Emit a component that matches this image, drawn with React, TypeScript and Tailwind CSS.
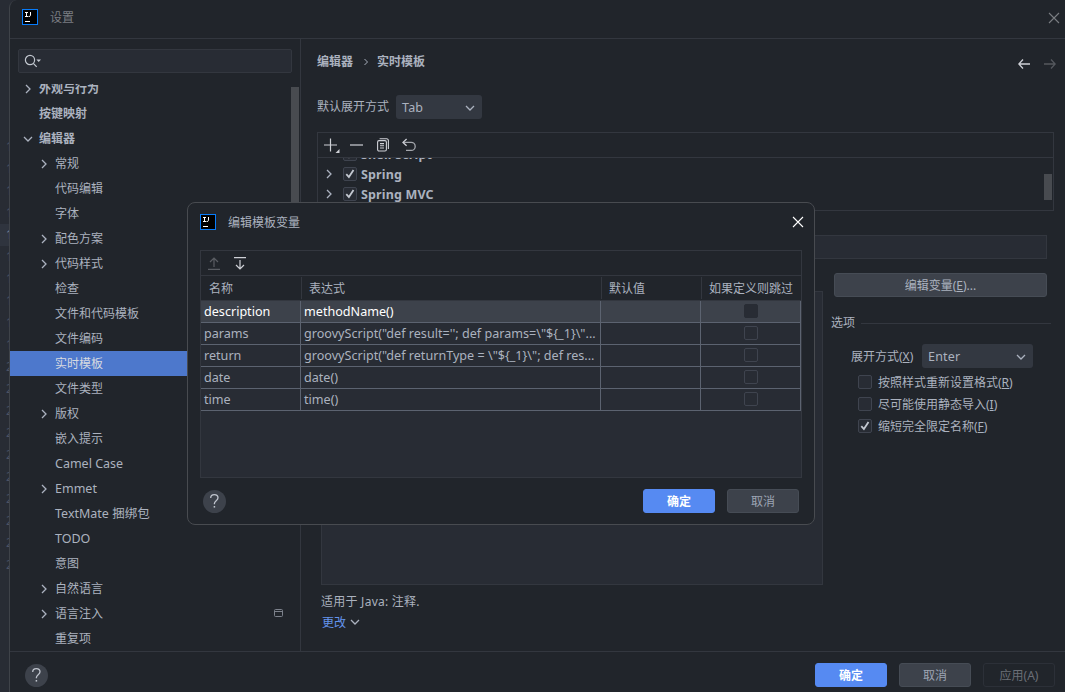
import React from 'react';

interface TreeItem {
  label: string;
  level: 0 | 1;
  arrow?: 'right' | 'down';
  bold?: boolean;
  selected?: boolean;
  latin?: boolean;
  project?: boolean;
}

const treeItems: TreeItem[] = [
  { label: '外观与行为', level: 0, arrow: 'right', bold: true },
  { label: '按键映射', level: 0, bold: true },
  { label: '编辑器', level: 0, arrow: 'down', bold: true },
  { label: '常规', level: 1, arrow: 'right' },
  { label: '代码编辑', level: 1 },
  { label: '字体', level: 1 },
  { label: '配色方案', level: 1, arrow: 'right' },
  { label: '代码样式', level: 1, arrow: 'right' },
  { label: '检查', level: 1 },
  { label: '文件和代码模板', level: 1 },
  { label: '文件编码', level: 1 },
  { label: '实时模板', level: 1, selected: true },
  { label: '文件类型', level: 1 },
  { label: '版权', level: 1, arrow: 'right' },
  { label: '嵌入提示', level: 1 },
  { label: 'Camel Case', level: 1, latin: true },
  { label: 'Emmet', level: 1, arrow: 'right', latin: true },
  { label: 'TextMate 捆绑包', level: 1, latin: true },
  { label: 'TODO', level: 1, latin: true },
  { label: '意图', level: 1 },
  { label: '自然语言', level: 1, arrow: 'right' },
  { label: '语言注入', level: 1, arrow: 'right', project: true },
  { label: '重复项', level: 1 },
];

const variables = [
  { name: 'description', expression: 'methodName()' },
  { name: 'params', expression: 'groovyScript("def result=\'\'; def params=\\"${_1}\\"...' },
  { name: 'return', expression: 'groovyScript("def returnType = \\"${_1}\\"; def res...' },
  { name: 'date', expression: 'date()' },
  { name: 'time', expression: 'time()' },
];

// Leading digit of each editor line number, the rest is under the window
const gutterDigits = '11111111112222222222'.split('');
const currentLine = 4;

const Chevron: React.FC<{ dir: 'right' | 'down'; className?: string }> = ({ dir, className = '' }) => (
  <svg className={`shrink-0 ${className}`} width="10" height="10" viewBox="0 0 10 10" fill="none" stroke="currentColor" strokeWidth="1.3">
    <path d={dir === 'right' ? 'M3 1l4 4-4 4' : 'M1 3l4 4 4-4'} />
  </svg>
);

const Logo = () => (
  <svg className="shrink-0" width="16" height="16" viewBox="0 0 16 16">
    <rect x="0.5" y="0.5" width="15" height="15" fill="#000" stroke="#087cfa" />
    <path d="M3 3.5h3M4.5 3.5v4M3 7.5h3M8.5 3v3.5q0 1-2 1" fill="none" stroke="#fff" />
    <path d="M3 12.5h5" stroke="#fff" />
  </svg>
);

const CloseIcon = ({ className = '' }) => (
  <svg className={className} width="12" height="12" viewBox="0 0 12 12" stroke="currentColor" strokeWidth="1.1">
    <path d="M1 1l10 10M11 1L1 11" />
  </svg>
);

const Checkbox: React.FC<{ checked?: boolean; plain?: boolean }> = ({ checked, plain }) => (
  <span className={`flex h-3.5 w-3.5 shrink-0 items-center justify-center rounded-xs border bg-[#282c34] ${plain ? 'border-[#282c34]' : 'border-[#3f444f]'}`}>
    {checked && (
      <svg width="10" height="10" viewBox="0 0 10 10" fill="none" stroke="#c3c8d0" strokeWidth="1.8">
        <path d="M1.3 5.2l2.6 2.9 4.6-7" />
      </svg>
    )}
  </span>
);

const Button: React.FC<{ kind?: 'primary' | 'normal' | 'disabled'; children: React.ReactNode }> = ({ kind = 'normal', children }) => {
  const styles = {
    primary: 'border-[#568af2] bg-[#568af2] font-bold text-white',
    normal: 'border-[#464c55] bg-[#3d424b] text-[#9da5b4]',
    disabled: 'border-[#2c3038] text-[#6b6f77]',
  };
  return <button className={`flex h-6 w-[72px] items-center justify-center rounded-[3px] border pt-0.5 ${styles[kind]}`}>{children}</button>;
};

const HelpButton = () => (
  <button className="flex h-[23px] w-[23px] items-center justify-center rounded-full bg-[#3d424b]">
    <svg width="13" height="16" viewBox="0 0 13 16" fill="none" stroke="#c0c5ce" strokeWidth="1.3">
      <path d="M2.7 5C2.7 2.8 4.2 1.6 6.3 1.6S10 2.8 10 4.8c0 2.9-3.6 3-3.6 5.8v.6" />
      <path d="M6.4 13v1.6" strokeWidth="1.5" />
    </svg>
  </button>
);

const Select: React.FC<{ value: string; className: string }> = ({ value, className }) => (
  <div className={`flex h-6 items-center justify-between rounded-[3px] bg-[#333841] pr-[7px] pl-1.5 text-[12.5px] tracking-[0.2px] ${className}`}>
    <span className="pt-0.5">{value}</span>
    <Chevron dir="down" className="mt-0.5" />
  </div>
);

const Sidebar = () => (
  <div className="flex w-[291px] shrink-0 flex-col border-r border-[#33373f]">
    <div className="mt-2.5 mr-2 ml-2 flex h-6 shrink-0 items-center rounded-xs border border-[#33373f] bg-[#282c34] pl-[5px]">
      <svg width="18" height="14" viewBox="0 0 18 14" fill="none" stroke="#c3c8d0" strokeWidth="1.2">
        <circle cx="6" cy="6" r="4.6" />
        <path d="M9.3 9.3l3.4 3.5" />
        <path d="M12.4 5.6h4.6l-2.3 2.3z" fill="#c3c8d0" stroke="none" />
      </svg>
    </div>
    <div className="relative mt-[11px] min-h-0 flex-1 overflow-hidden">
      <div className="-mt-2">
        {treeItems.map((item) => (
          <div
            key={item.label}
            className={`flex h-[25px] items-center ${item.level === 0 ? 'pl-[13px]' : 'pl-[29px]'} ${item.selected ? 'bg-[#4d78cc] text-[#d7dae0]' : ''} ${item.bold ? 'font-bold' : ''}`}
          >
            <span className="flex w-4 shrink-0">{item.arrow && <Chevron dir={item.arrow} />}</span>
            <span className={item.latin ? 'pt-0.5 text-[12.5px]' : 'pt-px'}>{item.label}</span>
            {item.project && (
              <svg className="mr-[17px] mb-0.5 ml-auto" width="9" height="8" viewBox="0 0 9 8" fill="none" stroke="#7d828c">
                <rect x="0.5" y="0.5" width="8" height="7" rx="1" />
                <path d="M0.5 2.5h8" />
              </svg>
            )}
          </div>
        ))}
      </div>
      <div className="absolute top-[3px] right-px h-[200px] w-2 bg-[#484b50]" />
    </div>
  </div>
);

const TemplateGroups = () => (
  <div className="mt-[13px] mr-[11px] flex h-[79px] shrink-0 flex-col border border-[#33373f]">
    <div className="flex h-6 shrink-0 items-center pl-1.5 text-[#ced0d6]">
      <svg width="17" height="16" viewBox="0 0 17 16" fill="none" stroke="currentColor" strokeWidth="1.2">
        <path d="M6.5 1.5v13M0 8h13" />
        <path d="M15.5 12v4h-4z" fill="currentColor" stroke="none" />
      </svg>
      <svg className="ml-[9px]" width="13" height="16" viewBox="0 0 13 16" stroke="currentColor" strokeWidth="1.2">
        <path d="M0 8h13" />
      </svg>
      <svg className="ml-3.5" width="12" height="14" viewBox="0 0 12 14" fill="none" stroke="currentColor" strokeWidth="1.1">
        <path d="M2.6 .8h7.2a1.6 1.6 0 0 1 1.6 1.6v8.6" />
        <rect x="0.6" y="2.6" width="8.8" height="10.4" rx="1.4" />
        <path d="M3 5.6h4M3 7.8h4M3 10h4" />
      </svg>
      <svg className="-mt-px ml-[13px]" width="14" height="14" viewBox="0 0 14 14" fill="none" strokeWidth="1.3">
        <path d="M1 4.4h8.2a4 4 0 0 1 0 8H4" stroke="#a3a6ac" />
        <path d="M4.6 1L1 4.4l3.6 3.4" stroke="currentColor" />
      </svg>
    </div>
    <div className="relative min-h-0 flex-1 overflow-hidden border-t border-[#33373f]">
      <div className="-mt-3.5 text-[12.5px] font-bold tracking-[0.16px]">
        {['Shell Script', 'Spring', 'Spring MVC'].map((name, i) => (
          <div key={name} className="flex h-5 items-center pl-1.5">
            <Chevron dir="right" className={i === 0 ? 'invisible' : ''} />
            <span className="mr-1 ml-[9px]"><Checkbox checked /></span>
            <span className="pt-0.5">{name}</span>
          </div>
        ))}
      </div>
      <div className="absolute top-4 right-px h-[26px] w-2 bg-[#484b50]" />
    </div>
  </div>
);

const Options = () => (
  <div className="ml-2.5 flex-1">
    <button className="-mt-[18px] ml-px flex h-6 w-[213px] items-center justify-center rounded-[3px] border border-[#464c55] bg-[#3d424b] pt-0.5">
      编辑变量(<u>E</u>)...
    </button>
    <div className="mt-[18px] -ml-0.5 flex items-center gap-1.5">
      <span>选项</span>
      <div className="mr-3.5 h-px flex-1 bg-[#33373f]" />
    </div>
    <div className="mt-[13px] ml-[18px] flex items-center">
      <span className="w-[71px] pt-0.5">展开方式(<u>X</u>)</span>
      <Select value="Enter" className="w-[111px]" />
    </div>
    <div className="mt-[3px] ml-[25px]">
      <label className="flex h-[22px] items-center gap-1.5"><Checkbox /><span className="pt-px">按照样式重新设置格式(<u>R</u>)</span></label>
      <label className="flex h-[22px] items-center gap-1.5"><Checkbox /><span className="pt-px">尽可能使用静态导入(<u>I</u>)</span></label>
      <label className="flex h-[22px] items-center gap-1.5"><Checkbox checked /><span className="pt-px">缩短完全限定名称(<u>F</u>)</span></label>
    </div>
  </div>
);

const Content = () => (
  <div className="flex min-w-0 flex-1 flex-col pl-4">
    <div className="mt-3 flex h-[22px] shrink-0 items-center font-bold">
      <span>编辑器</span>
      <Chevron dir="right" className="mr-1.5 ml-2 scale-75" />
      <span>实时模板</span>
      <svg className="mt-1 mr-[9px] ml-auto" width="38" height="12" viewBox="0 0 38 12" fill="none" strokeWidth="1.3">
        <path d="M5 1.5L.8 6 5 10.5M.8 6H12" stroke="#ced0d6" />
        <path d="M33 1.5L37.2 6 33 10.5M37.2 6H26" stroke="#55585e" />
      </svg>
    </div>
    <div className="mt-[22px] flex h-6 shrink-0 items-center">
      <span className="w-[79px]">默认展开方式</span>
      <Select value="Tab" className="w-[86px]" />
    </div>
    <TemplateGroups />
    <div className="mt-6 mr-[18px] ml-1 h-6 shrink-0 border border-[#33373f] bg-[#282c34]" />
    <div className="mt-8 ml-1 flex h-[294px] shrink-0">
      <div className="w-[502px] shrink-0 border border-[#33373f] bg-[#282c34]" />
      <Options />
    </div>
    <div className="mt-[9px] ml-1 tracking-[0.25px]">适用于 Java: 注释.</div>
    <div className="mt-[5px] ml-[5px] flex items-center gap-1">
      <span className="text-[#6494ed]">更改</span>
      <Chevron dir="down" className="-mt-0.5" />
    </div>
  </div>
);

const VariablesDialog = () => (
  <div className="absolute top-[202px] left-[187px] flex h-[323px] w-[628px] flex-col rounded-lg border border-[#484b50] bg-[#21252b] px-3">
    <div className="flex h-[38px] shrink-0 items-center gap-3">
      <Logo />
      <span className="pt-px">编辑模板变量</span>
      <CloseIcon className="mr-[-2px] ml-auto text-white" />
    </div>
    <div className="mt-[9px] flex h-[228px] w-[602px] shrink-0 flex-col border border-[#33373f]">
      <div className="flex h-6 shrink-0 items-center gap-3.5 pl-[7px]">
        <svg width="12" height="13" viewBox="0 0 12 13" fill="none" stroke="#5a5d63" strokeWidth="1.2">
          <path d="M6 10V1.2M2 5l4-4 4 4M0 12.4h12" />
        </svg>
        <svg width="12" height="13" viewBox="0 0 12 13" fill="none" stroke="#ced0d6" strokeWidth="1.2">
          <path d="M6 3v8.8M2 8l4 4 4-4M0 .6h12" />
        </svg>
      </div>
      <div className="flex h-[26px] shrink-0 items-center border-y border-[#33373f]">
        <span className="flex h-[22px] w-[101px] items-center border-r border-[#33373f] pt-0.5 pl-2">名称</span>
        <span className="flex h-[22px] w-[300px] items-center border-r border-[#33373f] pt-0.5 pl-[7px]">表达式</span>
        <span className="flex h-[22px] w-[100px] items-center border-r border-[#33373f] pt-0.5 pl-[7px]">默认值</span>
        <span className="pt-0.5 pl-[7px]">如果定义则跳过</span>
      </div>
      <div className="flex-1 bg-[#282c34] text-[12.6px]">
        {variables.map((v, i) => (
          <div key={v.name} className={`flex h-[22px] w-[600px] border-b border-[#5c6370] ${i === 0 ? 'bg-[#3d424b] text-white' : ''}`}>
            <span className="flex w-[100px] items-center border-r border-[#5c6370] pt-0.5 pl-[3px]">{v.name}</span>
            <span className="flex w-[300px] items-center border-r border-[#5c6370] pt-0.5 pl-[3px] whitespace-nowrap">{v.expression}</span>
            <span className="w-[100px] border-r border-[#5c6370]" />
            <span className="flex w-[100px] items-start justify-center border-r border-[#5c6370] pt-[3px]"><Checkbox plain={i === 0} /></span>
          </div>
        ))}
      </div>
    </div>
    <div className="mt-[11px] flex items-center gap-3 pr-[3px] pl-[3px]">
      <HelpButton />
      <div className="ml-auto"><Button kind="primary">确定</Button></div>
      <Button>取消</Button>
    </div>
  </div>
);

const App = () => {
  return (
    <div className="relative flex h-[692px] w-[1065px] overflow-hidden bg-[#282c34] text-xs text-[#abb2bf] [font-family:'Noto_Sans','Noto_Sans_CJK_SC',sans-serif]">
      {/* Editor gutter behind the window */}
      <div className="w-[9px] shrink-0 overflow-hidden pt-[136px] text-[#4b5263]">
        {gutterDigits.map((n, i) => (
          <div key={i} className={`flex h-[22px] items-center pl-[6px] ${i === currentLine ? 'bg-[#2f343e] text-[#7b8394]' : ''}`}>{n}</div>
        ))}
      </div>

      <div className="flex min-w-0 flex-1 flex-col rounded-tl-lg border-l border-[#3f4349] bg-[#21252b]">
        <div className="flex h-[39px] shrink-0 items-center gap-3 border-b border-[#33373f] pb-1 pl-3 text-[#7a7d82]">
          <Logo />
          <span className="pt-0.5">设置</span>
          <CloseIcon className="mt-0.5 mr-[5px] ml-auto" />
        </div>
        <div className="flex min-h-0 flex-1">
          <Sidebar />
          <Content />
        </div>
        <div className="flex h-[41px] shrink-0 items-center gap-3 border-t border-[#33373f] pt-1.5 pr-2.5 pl-[15px]">
          <HelpButton />
          <div className="ml-auto"><Button kind="primary">确定</Button></div>
          <Button>取消</Button>
          <Button kind="disabled">应用(A)</Button>
        </div>
      </div>

      <VariablesDialog />
    </div>
  );
};

export default App;
